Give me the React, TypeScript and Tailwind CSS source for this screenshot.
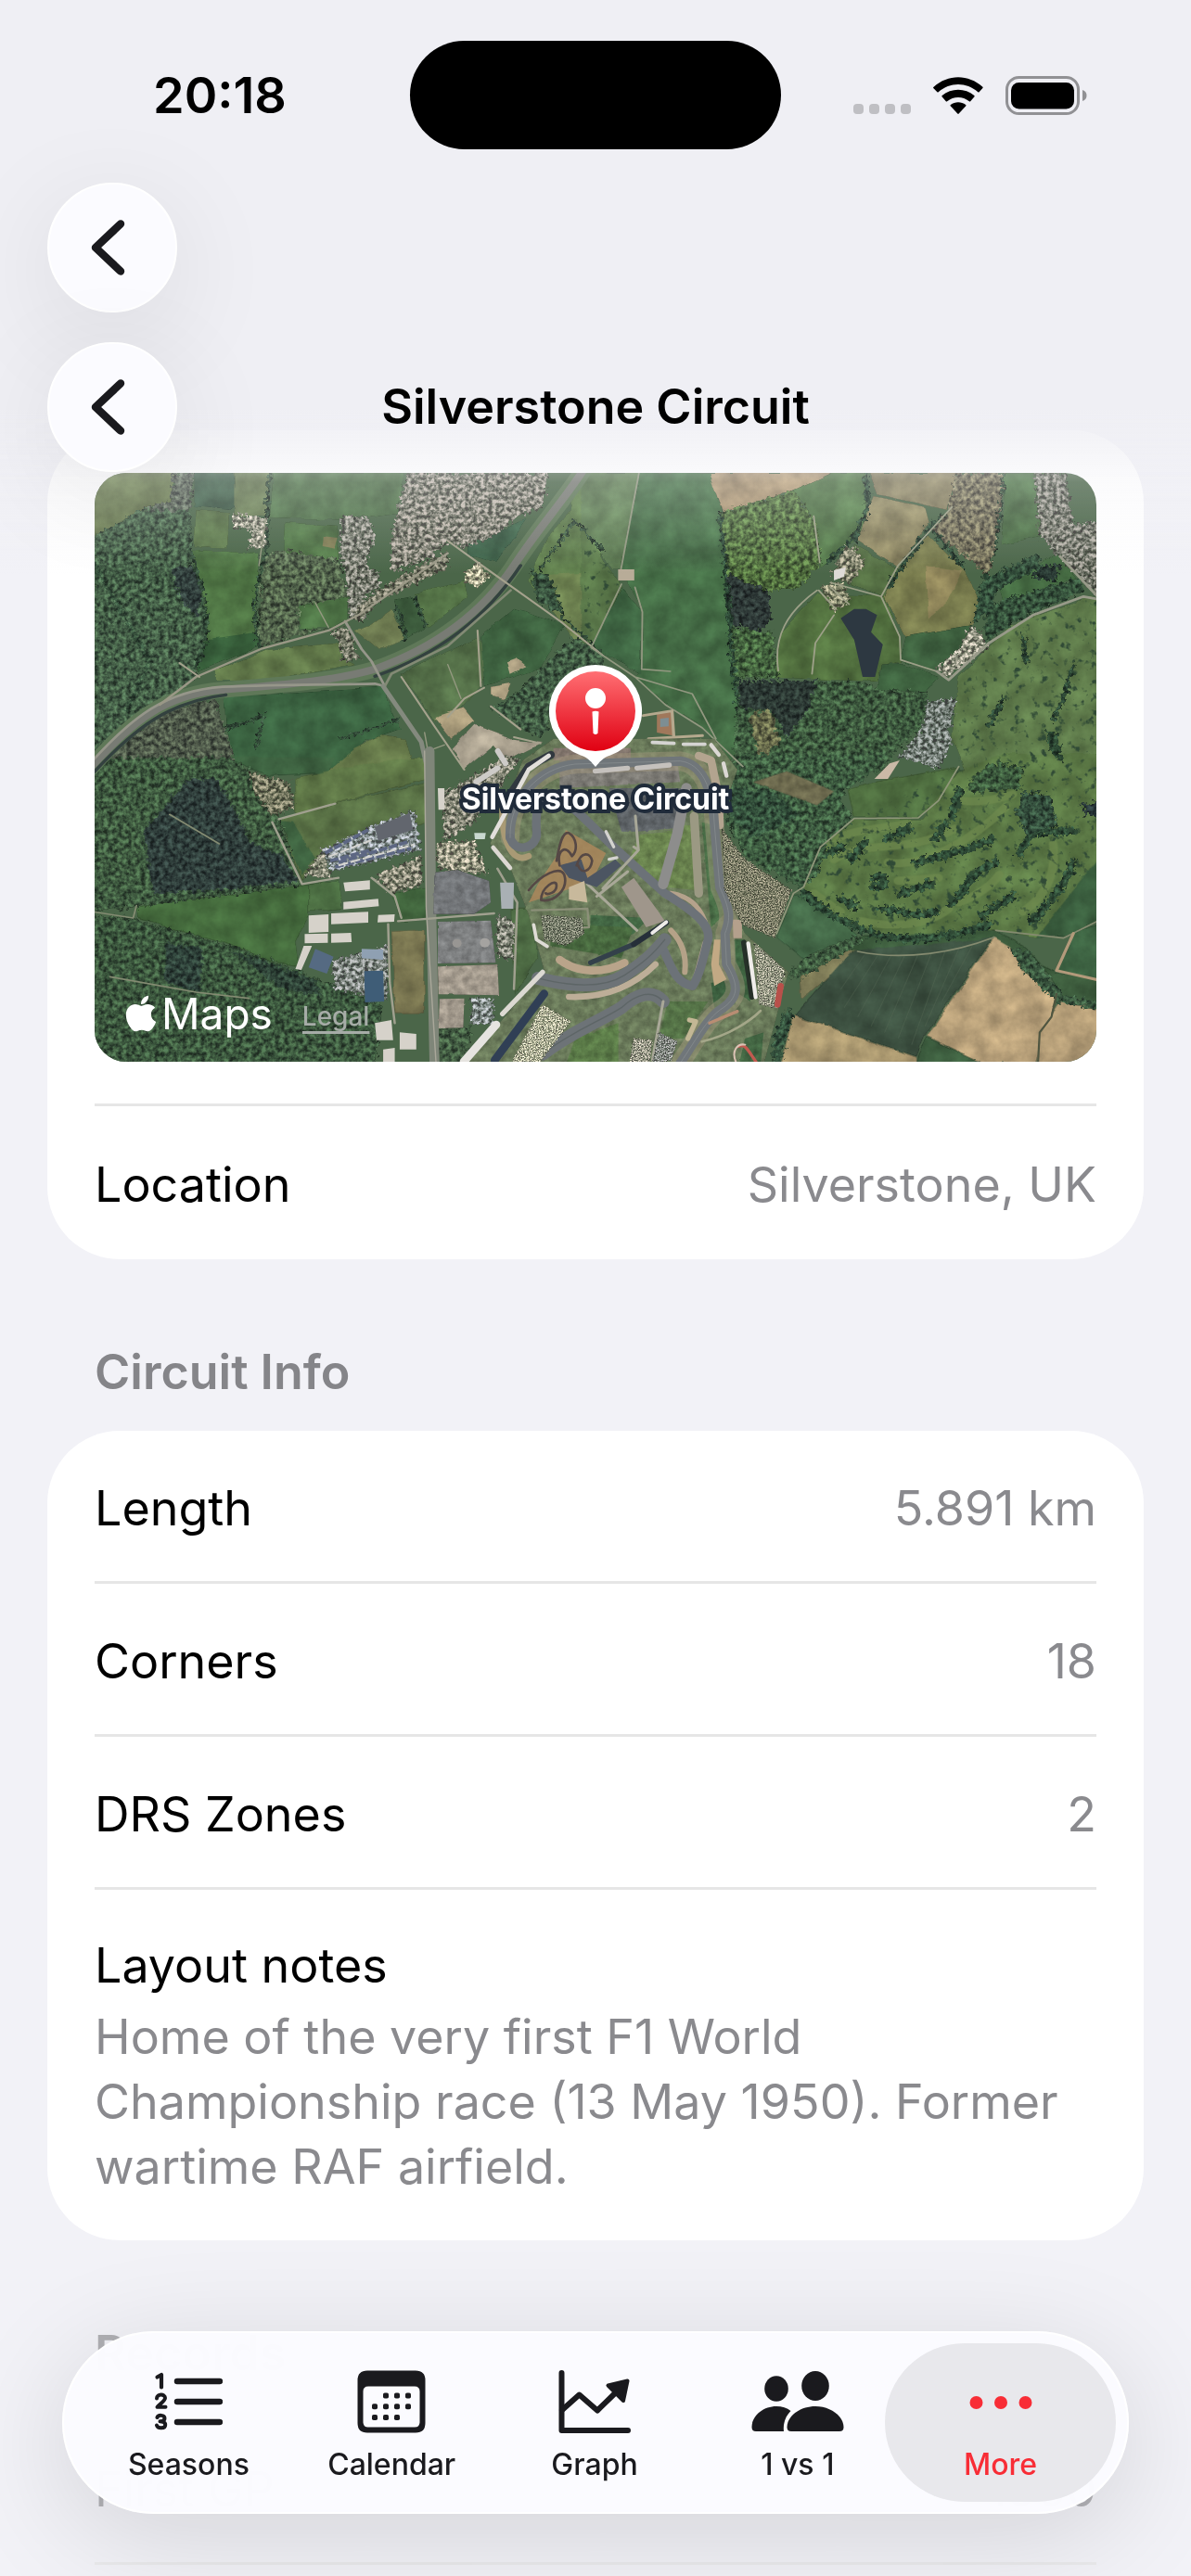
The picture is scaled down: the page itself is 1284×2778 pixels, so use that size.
import type { ReactNode } from "react";
import { FaApple } from "react-icons/fa";

type Shape = [fill: string, points: string];

const polys = (shapes: Shape[]) =>
  shapes.map(([fill, points], i) => <polygon key={i} fill={fill} points={points} />);

/* ---------- Satellite imagery, drawn sheet by sheet ---------- */

const nwFields: Shape[] = [
  ["#68794f", "30,30 272,30 265,120 180,148 30,238"],
  ["#41604a", "335,30 450,30 465,130 440,150 335,138"],
  ["#697d54", "455,30 560,30 550,168 455,168"],
  ["#4f7049", "570,30 965,30 950,160 780,182 560,175"],
  ["#5a7549", "340,150 440,160 435,272 335,268"],
  ["#4f7444", "325,278 530,290 515,520 525,590 370,572 365,430"],
  ["#365c39", "345,572 525,545 530,592 345,675"],
  ["#4e7244", "610,190 770,200 770,312 605,300"],
  ["#7d7a52", "725,235 770,240 760,278 722,270"],
  ["#4c7044", "650,460 800,430 800,500 740,530 650,535"],
  ["#62794a", "400,670 560,602 775,580 780,630 820,652 560,702 400,702"],
  ["#567548", "1000,420 1150,380 1160,430 1040,532"],
  ["#3f5f3f", "940,440 1000,428 1035,530 970,572"],
  ["#6d7a50", "865,520 930,470 970,572 890,602 820,540"],
  ["#3b5f46", "1160,260 1290,200 1340,180 1250,320 1160,290"],
  ["#607f4d", "1480,30 1568,30 1568,600 1440,500 1340,380 1400,240 1470,150"],
  ["#6d8150", "1400,360 1568,350 1568,480 1500,600 1410,470"],
  ["#3b6341", "425,752 900,722 960,860 850,900 760,985 460,962 430,850"],
  ["#66794a", "900,880 970,890 1000,995 740,995 820,922"],
  ["#546f48", "960,680 1190,560 1230,620 1200,720 1140,790 1060,832"],
  ["#3e6240", "1200,560 1300,470 1450,520 1380,660 1210,720"],
  ["#b0a283", "1230,722 1290,710 1270,762 1230,752"],
  ["#a5987c", "1280,640 1310,628 1340,655 1290,680"],
  ["#a9a08e", "1110,922 1180,842 1300,890 1390,900 1280,960 1240,912 1150,992"],
  ["#ab9d7c", "1060,820 1150,790 1180,830 1110,890"],
];

const nwWoods: Shape[] = [
  ["#5a6558", "270,30 332,30 322,155 250,160 180,148 265,120"],
  ["#456048", "30,238 180,148 322,152 330,260 320,330 365,470 370,560 340,640 340,688 250,770 130,860 30,955"],
  ["#34423f", "265,340 330,330 360,420 340,500 290,430"],
  ["#54664d", "540,290 600,280 770,310 800,430 650,460 650,540 740,532 530,592"],
  ["#515c4c", "240,790 400,762 455,960 430,1000 30,1000 30,980"],
  ["#425d45", "1290,760 1480,560 1570,620 1570,650 1430,720 1400,860 1380,890 1230,790"],
  ["#3c5742", "1350,340 1400,360 1440,480 1370,450"],
];

const nwTowns: Shape[] = [
  ["#827f79", "780,170 860,175 880,240 850,330 890,350 895,400 850,430 860,500 805,500 790,350 775,300"],
  ["#857f78", "950,150 980,30 1400,30 1390,140 1310,170 1250,230 1150,270 1100,255 1050,300 930,352 930,240"],
  ["#7d796d", "810,480 890,410 1100,280 1100,335 900,440 830,512"],
  ["#a39c92", "448,165 552,172 550,270 500,272 510,215 448,205"],
  ["#7d7a6f", "740,540 800,530 820,600 840,632 785,635 775,580"],
  ["#b3a996", "1150,350 1190,320 1230,360 1190,400 1150,380"],
];

const neFields: Shape[] = [
  ["#5c7a51", "-10,30 165,30 108,340 80,340 -10,190"],
  ["#587548", "-10,200 80,350 110,400 20,592 -10,580"],
  ["#456d46", "165,30 372,30 405,150 440,620 470,900 430,965 350,850 220,760 150,690 172,660 170,460 108,345"],
  ["#3f6643", "20,595 110,400 165,470 168,680"],
  ["#a5906f", "370,30 735,30 620,86 410,160"],
  ["#517547", "620,86 735,30 832,30 840,170 800,250 700,335 680,180"],
  ["#867f5f", "845,30 1098,30 1080,150 870,100"],
  ["#8c8560", "860,105 1010,140 1022,190 930,335 805,242"],
  ["#76794c", "930,340 1022,230 1130,350 1170,440 1150,522 950,560 890,430"],
  ["#8e8459", "1010,330 1120,350 1080,440 1020,500"],
  ["#4a6c44", "1245,30 1370,30 1370,230 1240,262"],
  ["#546e43", "800,260 930,340 890,430 790,390"],
  ["#52703f", "575,560 690,420 890,430 935,560 940,642 880,650 870,705 568,692"],
  ["#3f6240", "950,560 1150,522 1110,610 1040,672 935,635"],
  ["#3f6340", "880,650 940,645 1050,690 1010,740 870,730"],
  ["#456a42", "1230,410 1400,290 1460,370 1240,450"],
  ["#5f7b4b", "1110,690 1270,520 1500,430 1530,440 1530,995 1130,995 1090,890 1100,760"],
];

const neWoods: Shape[] = [
  ["#52703f", "405,160 620,86 690,200 700,320 640,400 550,412 430,362"],
  ["#2f3a38", "425,360 545,410 552,505 520,542 440,522"],
  ["#466640", "440,532 555,545 575,692 450,692"],
  ["#736f58", "1100,30 1242,30 1220,250 1200,362 1030,212 1080,150"],
  ["#3f5c40", "460,702 820,706 870,730 1020,740 1000,850 930,920 880,1000 440,1000"],
  ["#2d3a35", "460,702 690,702 660,800 600,885 560,800 460,790"],
  ["#6a6d4d", "490,820 550,790 580,900 520,960"],
  ["#35513d", "1180,380 1340,290 1360,330 1220,410 1210,470 1150,520"],
  ["#36523c", "1240,442 1470,370 1480,410 1280,510 1190,580 1190,480"],
  ["#2a3a34", "1340,340 1410,320 1400,380 1330,370"],
  ["#2e4a35", "1370,860 1400,870 1420,970 1380,930"],
];

const neTowns: Shape[] = [
  ["#7b7872", "1335,30 1425,30 1450,200 1530,180 1530,440 1400,290 1350,230"],
  ["#a19a90", "1075,690 1042,662 1110,600 1150,520 1185,560 1195,600"],
  ["#7b7f7e", "1020,770 1100,760 1080,870 1090,900 1050,985 935,950 1000,860"],
  ["#8f8b76", "700,400 760,380 790,440 740,480"],
  ["#8b8675", "770,270 800,270 830,325 785,390 735,360"],
];

const seFields: Shape[] = [
  ["#4f6e40", "780,90 860,70 1112,20 1050,130 990,186 800,182"],
  ["#5b7845", "800,190 1000,190 1110,30 1250,-20 1530,-20 1530,320 1340,572 1220,550 930,592 720,502 650,412 700,290"],
  ["#3b5f3f", "1530,310 1340,572 1440,565 1530,522"],
  ["#456a49", "620,435 660,430 810,565 650,642 570,570"],
  ["#3d5c3d", "650,645 820,570 1220,552 1310,600 1420,760 1530,790 1530,700 1400,690 1210,575 640,720"],
  ["#7e7b57", "640,700 780,612 812,620 645,775"],
  ["#3d5141", "790,620 1210,575 1010,892 985,958 625,822"],
  ["#baa27b", "1215,572 1262,602 1300,680 1402,752 1380,830 1340,980 1180,980 1015,895"],
  ["#b49d77", "1410,780 1530,808 1530,980 1345,980 1350,880"],
  ["#a8966e", "620,822 985,960 985,985 580,985"],
  ["#3e5f40", "1015,898 1190,985 985,985 990,955"],
  ["#3c6141", "1450,560 1530,530 1530,712 1400,682"],
];

const seWoods: Shape[] = [
  ["#3f5e42", "430,30 470,-20 900,-20 830,60 780,90 760,130 800,190 720,260 690,370 640,412 480,310 420,200"],
  ["#35523d", "440,90 560,100 640,180 500,250 430,180"],
  ["#3d5b3e", "1135,80 1200,8 1300,20 1290,95 1150,105"],
  ["#35503e", "1300,100 1380,110 1400,210 1310,240 1280,170"],
  ["#2b3a3c", "1478,140 1530,130 1530,185 1485,175"],
  ["#3b5840", "1260,600 1320,620 1420,760 1530,780 1530,805 1400,780 1300,680"],
  ["#35523e", "560,985 560,900 600,800 620,820 580,985"],
  ["#415e42", "650,640 800,570 830,585 650,700 600,700"],
];

const swFields: Shape[] = [
  ["#3d6140", "420,-10 760,-10 740,40 560,50"],
  ["#5f7747", "640,55 760,30 1000,-10 1035,-10 1040,60 760,140 640,180"],
  ["#5a7246", "590,190 760,140 1040,70 1040,200 720,300 660,390"],
  ["#3e6240", "590,195 630,200 700,320 660,370"],
  ["#456b3d", "160,470 680,402 680,500 640,590 650,665 560,650 450,600 160,512"],
  ["#4a6b41", "680,400 770,390 780,480 680,490"],
  ["#42663e", "930,430 1035,410 1035,510 960,520"],
  ["#7c7852", "930,550 1030,545 1030,820 940,820"],
  ["#7f684b", "360,615 430,620 560,712 700,772 660,806 350,752"],
  ["#4f6d45", "1290,480 1350,480 1370,640 1300,760"],
];

const swWoods: Shape[] = [
  ["#405c41", "30,-10 430,-10 500,30 590,190 655,402 165,472 30,490"],
  ["#303f3c", "180,230 320,60 400,60 470,180 500,260 600,310 645,392 400,420 210,430"],
  ["#3d593f", "30,500 150,512 450,602 620,670 900,790 880,985 30,985"],
  ["#2f423a", "250,590 360,610 350,750 245,720"],
  ["#304539", "440,610 700,710 720,760 600,740"],
  ["#435d43", "1075,870 1170,860 1160,985 1075,985"],
];

const swTowns: Shape[] = [
  ["#8f929a", "720,290 870,212 1000,165 1015,290 750,358"],
  ["#8f897d", "880,370 1020,310 1020,400 930,430"],
  ["#a29a8c", "1065,265 1180,262 1220,370 1070,350"],
  ["#8c877d", "1085,110 1270,-10 1320,-10 1180,200 1090,260"],
  ["#938e82", "668,370 720,290 750,380"],
  ["#858687", "750,650 920,600 915,770 760,740"],
  ["#8b8881", "1250,500 1300,520 1300,640 1250,640"],
  ["#8d9094", "1170,770 1235,770 1240,850 1170,850"],
  ["#7d7967", "500,40 620,70 635,150 570,180 520,110"],
];

const sheds =
  "M785,395L865,388L865,418L790,424Z M785,458L890,448L892,472L785,482Z M680,502L740,498L740,555L680,558Z M748,495L860,490L860,525L748,530Z M668,562L738,560L738,590L668,592Z M748,560L808,558L810,588L748,590Z M890,500L940,498L938,522L888,524Z M690,600L665,600L640,675L658,678Z M880,850L930,840L935,905L885,905Z M955,880L1005,885L1005,935L955,935Z M905,935L940,930L940,975L905,975Z M1070,90L1090,90L1090,160L1072,160Z";

const Line = ({ d, c, w, o = 1 }: { d: string; c: string; w: number; o?: number }) => (
  <path d={d} fill="none" stroke={c} strokeWidth={w} opacity={o} strokeLinecap="round" strokeLinejoin="round" />
);

function CircuitTrack() {
  const outer =
    "M240,310 C235,190 330,85 450,72 L790,62 C860,70 895,150 900,260 L918,470 C950,540 955,570 935,620 L940,720 C975,780 985,820 930,860 C880,890 850,950 790,1040";
  const inner =
    "M240,310 C255,365 335,345 325,285 C322,220 330,160 380,170 C440,200 500,270 580,345 L740,490 C830,545 890,590 880,640 C860,720 850,760 830,790 C770,780 760,720 725,650";
  const lower =
    "M330,765 C430,790 540,800 610,755 C670,715 700,690 740,640 M345,1010 C450,930 530,905 600,860 C650,815 700,800 735,840";
  return (
    <g transform="translate(368 290) scale(.3333)">
      <g filter="url(#ground)">
        <polygon
          fill="#6a7a5a"
          points="280,60 380,-10 900,-10 975,90 915,260 940,500 1000,620 1140,745 1060,1045 90,1045 350,740 300,560 245,420 175,330"
        />
        <polygon fill="#7c7a74" points="400,60 780,60 790,130 400,150" />
        <polygon fill="#85786f" points="380,20 630,20 630,60 380,60" />
        <polygon fill="#5f6468" points="560,150 810,150 770,280 650,290 600,290" />
        <polygon fill="#6c8650" points="660,300 765,290 720,460 620,390" />
        <polygon fill="#69824e" points="790,270 830,270 840,480 750,470" />
        <polygon fill="#436744" points="500,560 690,570 640,620 500,680" />
        <polygon fill="#48693f" points="370,590 640,600 600,700 370,660" />
        <polygon fill="#4b7048" points="860,260 900,270 930,560 890,600" />
        <polygon fill="#3d6140" points="890,780 960,770 970,850 900,860" />
        <polygon fill="#3f6441" points="965,640 1000,640 1020,840 970,810" />
        <polygon fill="#557347" points="750,840 880,840 800,960 720,960" />
        <polygon fill="#5b7b48" points="450,960 590,910 590,1045 420,1045" />
        <polygon fill="#436643" points="1000,960 1060,940 1050,1045 980,1045" />
      </g>
      <Line d={outer} c="#a4987f" w={62} o={0.45} />
      <Line d="M850,45 L890,60 L915,180 L918,270" c="#b3a48f" w={26} />
      <Line d="M215,210 C210,300 240,400 300,370" c="#a99a75" w={20} />
      <Line d="M400,705 C460,750 540,750 610,715" c="#b9a48a" w={26} />
      <Line d="M430,825 C550,830 640,790 710,720" c="#bdae98" w={20} />
      <Line d="M760,610 C800,650 810,700 805,745" c="#b5a288" w={18} />
      <Line d="M760,490 C820,500 850,530 870,580" c="#b5a28c" w={16} />
      <polygon fill="#c2a984" points="900,640 920,640 915,720 940,768 900,790 890,720" />
      <Line d="M870,650 L835,780" c="#b39f92" w={16} />
      <polygon fill="#b4a08c" points="960,575 990,575 990,635 962,635" />
      <polygon fill="#9f968b" points="600,470 640,440 720,550 740,580 680,600" />
      <Line d={outer} c="#70767a" w={30} />
      <Line d={inner} c="#6c7278" w={28} />
      <Line d={lower} c="#6d7377" w={42} />
      <Line d={lower} c="#57605f" w={4} o={0.7} />
      <Line d={outer} c="#8a8f90" w={3} o={0.7} />
      <Line d="M810,150 L780,300 L735,460" c="#8d8d8c" w={34} />
      <Line d="M835,240 L850,490" c="#9b9983" w={28} />
      <Line d="M645,240 L655,350 L540,475 M490,460 L650,610 M520,500 L620,420 M735,840 L700,1030 M655,350 L640,340" c="#a9a898" w={9} />
      <Line d="M310,545 L490,540 L495,600 L370,605" c="#8c9079" w={7} />
      <g filter="url(#roofs)">
        <polygon fill="#7d7d70" points="340,560 470,570 480,620 420,660 350,640" />
        <polygon fill="#a19a90" points="640,960 700,965 690,1045 625,1045" />
        <polygon fill="#8b8a8a" points="720,940 780,970 760,1030 700,1045" />
        <polygon fill="#b5ae9c" points="345,850 435,905 330,1045 240,1045" />
        <polygon fill="#9d988b" points="1030,650 1130,740 1100,860 1045,850" />
        <polygon fill="#827d6c" points="925,280 1000,380 1150,480 1095,635 990,590 935,480" />
      </g>
      <polygon fill="#ab875c" points="390,370 420,285 550,360 510,440 480,460 300,520 330,460" opacity=".85" />
      <polygon fill="#4c5562" points="400,400 470,380 490,440 580,380 600,400 520,470 430,440" />
      <Line
        d="M390,385 C400,330 410,290 430,295 C455,310 460,350 440,370 C420,330 390,350 400,400 M455,400 C470,350 500,360 505,385 C500,420 470,430 460,400 M300,480 C340,430 400,400 415,430 C430,480 380,520 340,512 C340,470 390,440 390,465 C390,490 360,495 355,490"
        c="#554845"
        w={8}
      />
      <polygon fill="#c8b99c" points="430,470 480,450 490,520 430,510" />
      <Line d="M372,42 L300,80 L240,170" c="#31383f" w={25} />
      <Line d="M365,45 L300,90 L182,308" c="#e2dfdb" w={14} />
      <Line d="M185,342 L240,408" c="#dcd8d2" w={14} />
      <Line d="M316,592 L325,640 L360,662" c="#dfdcd6" w={11} />
      <Line d="M500,715 L640,655" c="#33404a" w={16} />
      <Line d="M640,655 L745,585" c="#262f39" w={18} />
      <Line d="M700,618 L745,583" c="#eeece9" w={12} />
      <Line d="M350,815 L190,1030" c="#303f55" w={26} />
      <Line d="M345,745 L215,880" c="#dcd9d2" w={16} />
      <Line d="M195,915 L90,1035" c="#e6e4e0" w={26} />
      <Line d="M996,650 L1022,825" c="#263028" w={18} />
      <Line d="M1010,652 L1034,826" c="#f0edea" w={13} />
      <Line d="M1115,790 L1105,850" c="#b8504a" w={20} />
      <Line d="M980,985 C1000,975 1010,1000 1035,1035" c="#c25a50" w={10} />
      <Line d="M970,1035 C955,1000 975,975 1000,980" c="#dcc3b5" w={6} />
      <Line d="M885,910 L975,872" c="#b98d73" w={10} />
      <Line d="M860,970 C950,950 1020,900 1050,870" c="#a4a789" w={8} />
      <Line d="M820,900 L840,905 L815,960" c="#c3b795" w={16} />
      <Line d="M515,95 L620,85 M650,85 L755,75" c="#c5c1bd" w={16} />
      <Line d="M200,30 L225,70 M130,130 L200,85" c="#cdcbc8" w={18} />
      <Line d="M700,2 L770,5 M800,8 L870,8" c="#d5d4d2" w={11} />
      <Line d="M890,10 L915,42 M930,70 L940,110" c="#dcd8d4" w={13} />
      <Line d="M550,290 L575,340 M585,375 L560,380" c="#d4d3d0" w={10} />
    </g>
  );
}

function SatelliteImage() {
  return (
    <svg
      className="block aspect-[1080/635] w-full"
      viewBox="0 0 1080 635"
      preserveAspectRatio="xMidYMid slice"
      role="img"
      aria-label="Satellite view of Silverstone Circuit"
    >
      <defs>
        <filter id="canopy" x="-5%" y="-5%" width="110%" height="110%" colorInterpolationFilters="sRGB">
          <feTurbulence type="fractalNoise" baseFrequency=".2" numOctaves="3" seed="4" result="n" />
          <feColorMatrix in="n" type="matrix" values="2 0 0 0 -.5 2 0 0 0 -.5 1.8 0 0 0 -.4 0 0 0 0 1" result="m" />
          <feDisplacementMap in="SourceGraphic" in2="n" scale="12" xChannelSelector="G" yChannelSelector="B" result="s" />
          <feComposite in="s" in2="m" operator="arithmetic" k1=".95" k2=".5" />
        </filter>
        <filter id="roofs" x="-5%" y="-5%" width="110%" height="110%" colorInterpolationFilters="sRGB">
          <feTurbulence type="fractalNoise" baseFrequency=".24" numOctaves="3" seed="11" result="n" />
          <feColorMatrix in="n" type="matrix" values="2.7 0 0 0 -.9 2.5 0 0 0 -.75 2.7 0 0 0 -.9 0 0 0 0 1" result="m" />
          <feDisplacementMap in="SourceGraphic" in2="n" scale="12" xChannelSelector="G" yChannelSelector="B" result="s" />
          <feComposite in="s" in2="m" operator="arithmetic" k1="1" k2=".5" />
        </filter>
        <filter id="ground" x="-5%" y="-5%" width="110%" height="110%" colorInterpolationFilters="sRGB">
          <feTurbulence type="fractalNoise" baseFrequency=".04" numOctaves="5" seed="8" result="n" />
          <feColorMatrix in="n" type="matrix" values="1.3 0 0 0 -.15 1.3 0 0 0 -.15 1.3 0 0 0 -.15 0 0 0 0 1" result="m" />
          <feDisplacementMap in="SourceGraphic" in2="n" scale="6" xChannelSelector="G" yChannelSelector="B" result="s" />
          <feComposite in="s" in2="m" operator="arithmetic" k1=".4" k2=".8" />
        </filter>
        <filter id="trees" x="-5%" y="-5%" width="110%" height="110%" colorInterpolationFilters="sRGB">
          <feTurbulence type="fractalNoise" baseFrequency=".11" numOctaves="3" seed="21" result="n" />
          <feColorMatrix in="n" type="matrix" values="0 0 0 0 .19 0 0 0 0 .29 0 0 0 0 .21 6 0 0 0 -3.6" result="m" />
          <feComposite in="m" in2="SourceAlpha" operator="in" />
        </filter>
      </defs>

      <rect width="1080" height="635" fill="#4b6649" />

      <g filter="url(#ground)">
        <g transform="matrix(.357 0 0 .3333 -12 -10)">{polys(nwFields)}</g>
        <g transform="matrix(.3636 0 0 .3333 528 -10)">{polys(neFields)}</g>
        <g transform="matrix(.357 0 0 .3333 -12 310)">{polys(swFields)}</g>
        <g transform="matrix(.3636 0 0 .3333 528 310)">{polys(seFields)}</g>
      </g>

      {/* dark crop rows and fairways */}
      <g transform="matrix(.3636 0 0 .3333 528 310)">
        <path
          d="M830,630L760,740M870,630L770,800M910,630L810,830M950,630L850,860M990,625L890,880M1030,620L930,900M1070,615L970,920M1110,610L1010,860M1150,600L1060,780"
          stroke="#5a6b58"
          strokeWidth="2"
          opacity=".7"
        />
        <Line d="M720,270 C780,220 900,220 960,205 M740,320 C850,250 950,310 1100,220 M900,330 C1000,350 1150,260 1250,150 M930,390 L1050,380 M1110,460 C1180,430 1210,400 1230,370 M820,520 C900,540 1010,540 1080,480 M680,430 C720,460 740,480 760,490 M1300,490 C1370,440 1400,360 1390,270 M1120,130 C1180,140 1240,120 1270,110" c="#6f8a4f" w={26} o={0.7} />
      </g>
      <g filter="url(#canopy)">
        <g transform="matrix(.3636 0 0 .3333 528 310)">
          <Line d="M760,280 L710,310 M830,265 L790,320 M960,220 L900,250 M1040,250 L1070,210 M980,330 C1050,310 1120,300 1210,255 M860,380 C900,360 900,420 860,410 M940,430 L1030,400 M1090,460 C1130,440 1120,370 1220,330 M760,450 C780,440 780,480 800,470 M880,480 C950,490 1000,510 1040,490 M650,430 C720,500 780,530 880,570 C980,590 1100,570 1200,530 M1180,500 L1270,440 M1330,520 L1420,400 L1450,330 M1290,300 L1330,230 L1450,230 M1090,180 L1110,100" c="#314e39" w={24} />
        </g>
        <g transform="matrix(.3636 0 0 .3333 528 -10)">
          <Line d="M1450,650 L1420,760 L1390,830 M1240,760 L1200,850 M1300,560 L1310,640 M405,160 L440,640 L470,900 M835,40 L840,150 L800,240 L720,320 M1080,160 L1020,210 L900,400 M1240,40 L1220,240 L1190,370 M1030,210 L1120,330" c="#2f4a38" w={13} />
        </g>
      </g>
      <g filter="url(#trees)">
        <g transform="matrix(.3636 0 0 .3333 528 -10)">
          <polygon points="1110,720 1300,520 1518,430 1518,990 1110,990" />
          <polygon points="0,190 80,340 110,400 20,590 0,590" />
        </g>
        <g transform="matrix(.3636 0 0 .3333 528 310)">
          <polygon points="700,290 800,190 1110,30 1518,0 1518,320 1340,560 930,590 720,500" />
        </g>
      </g>

      <g filter="url(#canopy)">
        <g transform="matrix(.357 0 0 .3333 -12 -10)">
          {polys(nwWoods)}
          <Line d="M325,280 L365,440 L370,560 L340,660 M560,30 L550,280 L515,450 L530,590 M425,860 L545,815 L520,920 M780,890 L950,830 M1400,360 L1450,500 L1560,610 M945,460 L975,570 M1000,440 L1035,530 M1480,180 L1568,280 M1480,190 L1380,340 M30,320 L200,640 L130,800" c="#334b39" w={10} />
        </g>
        <g transform="matrix(.3636 0 0 .3333 528 -10)">{polys(neWoods)}</g>
        <g transform="matrix(.357 0 0 .3333 -12 310)">{polys(swWoods)}</g>
        <g transform="matrix(.3636 0 0 .3333 528 310)">{polys(seWoods)}</g>
      </g>
      <g filter="url(#ground)" transform="matrix(.3636 0 0 .3333 528 310)">
        <polygon fill="#6f6c50" points="500,70 600,35 740,100 690,145" />
      </g>
      <g filter="url(#roofs)">
        <g transform="matrix(.357 0 0 .3333 -12 -10)">{polys(nwTowns)}</g>
        <g transform="matrix(.3636 0 0 .3333 528 -10)">{polys(neTowns)}</g>
        <g transform="matrix(.357 0 0 .3333 -12 310)">{polys(swTowns)}</g>
      </g>

      {/* dual carriageway and lanes, north west */}
      <g transform="matrix(.357 0 0 .3333 -12 -10)">
        <Line d="M20,985 C150,830 250,745 420,732 C600,715 750,705 880,665 C1050,600 1200,490 1300,330 C1380,200 1450,120 1510,20" c="#5f7858" w={52} />
        <Line d="M20,985 C150,830 250,745 420,732 C600,715 750,705 880,665 C1050,600 1200,490 1300,330 C1380,200 1450,120 1510,20" c="#787b74" w={24} />
        <Line d="M30,1000 C160,850 260,770 430,748 M880,688 C1060,622 1210,510 1320,330" c="#33413f" w={10} />
        <Line d="M20,970 C150,815 250,735 420,722 C600,715 760,715 880,712 L910,720 L870,640 L840,600 L790,510" c="#96968a" w={8} />
        <Line d="M910,720 L930,680 L1100,590 L1290,410" c="#838a75" w={8} />
        <Line d="M230,780 L340,690 L540,598 L740,540 L830,490 L1100,290" c="#9a9886" w={7} />
        <Line d="M290,645 L350,690 M1100,250 L1230,350 L1440,510 L1568,620 M1190,540 L1200,720 M1210,725 L1150,760 L1100,820 M960,690 L1060,850 L1150,990 M1230,785 L1320,860 M1300,885 L1380,905" c="#a5a28d" w={6} />
        <Line d="M905,720 L1020,900 L1040,995" c="#848a7e" w={14} />
        <Line d="M700,450 L740,530 M550,180 L530,330 M1100,650 L1140,760 M1030,870 L1040,930 L1090,910" c="#949880" w={4} />
      </g>
      {/* lanes and lake, north east */}
      <g transform="matrix(.3636 0 0 .3333 528 -10)">
        <polygon fill="#2d3841" points="760,500 800,470 835,470 868,490 850,545 885,585 862,690 825,690 800,570" />
        <Line d="M162,30 L108,345 M110,390 L20,595 M150,400 L172,480 L170,665 L255,672 M20,595 L150,690 L320,745 L390,890 M150,690 L240,780 L350,855 L470,980" c="#929880" w={5} />
        <rect x="100" y="342" width="48" height="36" fill="#b8ac98" />
        <Line d="M690,410 C600,480 560,560 575,670 M730,385 L880,430 L935,560 L938,635 L1045,672 M740,490 L685,580 L675,680 M680,170 L698,320 M695,410 L745,470 M730,400 L785,455 M880,430 L930,330 L1090,140" c="#9da088" w={5} />
        <Line d="M1045,672 L1080,700 L1200,580 L1330,490 L1480,430 L1530,440 M1410,300 L1530,440" c="#989a89" w={8} />
        <polygon fill="#dedad6" points="740,345 775,335 770,365 740,378" />
        <polygon fill="#a0785b" points="215,810 262,800 262,880 215,870" />
        <polygon fill="#7d8e93" points="225,825 250,822 250,850 225,852" />
        <Line d="M175,815 L260,800 L265,880 M190,890 L350,880" c="#b5a98e" w={9} />
      </g>
      {/* industrial estate, south west */}
      <g transform="matrix(.357 0 0 .3333 -12 310)">
        <Line d="M1045,-30 L1050,480 L1060,985" c="#7f8679" w={30} />
        <Line d="M1030,-30 L1035,480 L1065,985" c="#a9a79a" w={4} />
        <Line d="M950,520 L1240,495 M920,530 L925,720 L940,850 M870,380 L940,440 L960,510 M1250,350 L1310,460 L1300,740 M570,200 L660,400 L770,380 M590,190 L760,140" c="#a0a08f" w={7} />
        <g filter="url(#ground)">
          <polygon fill="#74777a" points="1060,362 1130,355 1225,390 1230,460 1180,497 1057,497" />
          <polygon fill="#7e8081" points="1070,522 1230,518 1245,655 1070,657" />
          <polygon fill="#a39a8d" points="1070,667 1250,660 1255,760 1072,757" />
          <polygon fill="#a39a8d" points="1075,772 1150,770 1147,865 1072,867" />
        </g>
        <circle cx="1128" cy="592" r="14" fill="#989693" />
        <circle cx="1212" cy="590" r="15" fill="#a5a3a0" />
        <path d="M880,215 L985,170 L995,225 L890,260Z" fill="#62666e" />
        <path d="M730,300L860,225M745,325L870,290M760,345L990,285M770,330L985,262" stroke="#5d6783" strokeWidth="11" strokeDasharray="26 6" />
        <path d="M740,312L870,258M770,340L1000,272" stroke="#d5d4d0" strokeWidth="6" strokeDasharray="30 8" />
        <path d={sheds} fill="#d6d2ca" />
        <polygon fill="#556a82" points="700,610 755,635 735,690 680,670" />
        <polygon fill="#8fa0b2" points="840,610 905,612 905,645 840,640" />
        <polygon fill="#3f5d77" points="848,682 905,680 908,780 850,783" />
        <polygon fill="#c9d8d0" points="1180,235 1215,235 1212,255 1182,255" />
        <polygon fill="#a9b0b4" points="1258,395 1300,395 1298,480 1262,480" />
        <Line d="M30,490 L150,510 L160,470 M80,700 L340,750 L500,770 M260,175 L410,270" c="#848b72" w={5} />
      </g>
      <CircuitTrack />
      {/* boundary lanes, south east */}
      <g transform="matrix(.3636 0 0 .3333 528 310)">
        <Line d="M570,560 L620,430 L650,410 L700,280 L800,188 L990,186 L1050,130 L1110,20" c="#8f967a" w={5} />
        <Line d="M810,618 C950,650 1100,620 1215,572 M1220,550 L1420,575 L1518,522" c="#858b70" w={5} />
        <Line d="M1450,560 L1400,680 L1530,712" c="#b39a7b" w={9} />
        <Line d="M1400,755 L1385,830 L1350,880 L1345,980" c="#4f5540" w={6} />
        <polygon fill="#cbb9a7" points="860,60 905,10 935,0 900,60" />
      </g>
    </svg>
  );
}

function MapPin() {
  return (
    <svg className="block h-[112px] w-[104px]" viewBox="0 0 104 112" aria-hidden="true">
      <defs>
        <linearGradient id="pinFill" x1="0" y1="0" x2="0" y2="1">
          <stop offset="0" stopColor="#ff6f73" />
          <stop offset="1" stopColor="#e00012" />
        </linearGradient>
      </defs>
      <path
        d="M52 1a50 50 0 0 1 16 97.400C60 101 56 106 52 111c-4-5-8-10-16-12.600A50 50 0 0 1 52 1Z"
        fill="#fff"
      />
      <circle cx="52" cy="51" r="43" fill="url(#pinFill)" />
      <circle cx="52" cy="37" r="11" fill="#fff" />
      <path d="M48.500 51.500q3.500-1.500 7 0l-1 23q-2.500 3-5 0Z" fill="#fff" />
    </svg>
  );
}

/* ---------- Status bar ---------- */

function StatusBar() {
  return (
    <div className="grid h-[197px] grid-cols-[1fr_400px_1fr] items-start pt-[44px]">
      <div className="flex h-[117px] items-center justify-center pl-[32px] text-[54px] font-semibold">20:18</div>
      <div className="h-[117px] rounded-full bg-black" />
      <div className="flex h-[117px] items-center justify-end gap-[24px] pr-[112px]">
        <div className="flex gap-[6px] pt-[30px]">
          {[0, 1, 2, 3].map((i) => (
            <span key={i} className="size-[11px] rounded-[4px] bg-[#bfbfc3]" />
          ))}
        </div>
        <svg className="h-[40px] w-[54px]" viewBox="0 0 54 40" aria-label="Wi-Fi" role="img">
          <path d="M0 11.800Q0 11.300 .6 10.700C16 -3.300 38 -3.300 53.400 10.700Q54 11.300 53.400 12L49.600 16.200Q49 16.800 48.300 16.200C36 5.200 18 5.200 5.700 16.200Q5 16.800 4.400 16.200Z" />
          <path d="M9.500 21.200Q9 20.600 9.700 20C19.600 11.600 34.400 11.600 44.300 20Q45 20.600 44.500 21.200L40.200 26.200Q39.600 26.800 38.900 26.300C32 20.600 22 20.600 15.100 26.300Q14.400 26.800 13.800 26.200Z" />
          <path d="M18.700 31.200Q18.200 30.600 18.900 30C23.600 26.200 30.400 26.200 35.100 30Q35.800 30.600 35.300 31.200L27.700 39.600Q27 40.300 26.300 39.600Z" />
        </svg>
        <svg className="h-[42px] w-[88px]" viewBox="0 0 88 42" aria-label="Battery full" role="img">
          <rect x="1.500" y="1.500" width="77" height="39" rx="13" fill="none" stroke="#919194" strokeWidth="3" />
          <rect x="6" y="7" width="68" height="28.500" rx="8.500" />
          <path d="M83 15q4.500 1.500 4.500 6t-4.500 6Z" fill="#919194" />
        </svg>
      </div>
    </div>
  );
}

function BackButton() {
  return (
    <button
      type="button"
      aria-label="Back"
      className="flex size-[140px] items-center justify-center rounded-full border-2 border-white bg-[#fbfbff] shadow-[0_24px_120px_rgba(0,0,0,0.09)]"
    >
      <svg className="mr-[10px] h-[62px] w-[38px]" viewBox="0 0 38 62" fill="none" aria-hidden="true">
        <path d="M33 5.500 6 31l27 25.500" stroke="#1a1a1e" strokeWidth="8.500" strokeLinecap="round" strokeLinejoin="round" />
      </svg>
    </button>
  );
}

/* ---------- Lists ---------- */

function Row({ label, value, last = false }: { label: string; value: string; last?: boolean }) {
  return (
    <div
      className={
        last
          ? "flex h-[165px] items-center justify-between pt-[4px]"
          : "flex h-[165px] items-center justify-between border-b-[3px] border-[#e6e6e6] pt-[6px]"
      }
    >
      <dt>{label}</dt>
      <dd className="text-[#8a8a8e]">{value}</dd>
    </div>
  );
}

function Section({ title, children }: { title: string; children: ReactNode }) {
  return (
    <section>
      <h2 className="px-[51px] pt-[90px] pb-[31px] text-[52px] leading-[64px] font-semibold text-[#858589]">{title}</h2>
      {children}
    </section>
  );
}

/* ---------- Tab bar ---------- */

const seasonsIcon = (
  <svg className="h-[68px] w-[74px]" viewBox="0 0 74 68" fill="none" stroke="#1a1a1e" strokeLinecap="round" strokeLinejoin="round" aria-hidden="true">
    <path d="M25 12H71M25 34H71M25 56H71" strokeWidth="6.500" />
    <path d="M3.500 7.500 8 5V18.500" strokeWidth="4.200" />
    <path d="M3 30.500C3 25.200 12 25.200 12 30C12 33 7.500 35.500 3.500 39.800H12.500" strokeWidth="4" />
    <path d="M3.500 51C4.500 48 11.500 48 11.500 52C11.500 54.500 9 55.200 6.500 55.200C9.500 55.200 12.200 56.200 12.200 59C12.200 63.300 4 63.300 3 59.500" strokeWidth="4" />
  </svg>
);

const calendarIcon = (
  <svg className="h-[68px] w-[74px]" viewBox="0 0 74 68" aria-hidden="true">
    <path
      fill="#1a1a1e"
      fillRule="evenodd"
      d="M11 .5H63Q73.500 .5 73.500 11V57Q73.500 67.500 63 67.500H11Q.5 67.500 .5 57V11Q.5 .5 11 .5ZM12 17.500Q6.500 17.500 6.500 23V56Q6.500 61.500 12 61.500H62Q67.500 61.500 67.500 56V23Q67.500 17.500 62 17.500Z"
    />
    {[
      [31, 27.500], [43, 27.500], [55, 27.500],
      [19, 39.200], [31, 39.200], [43, 39.200], [55, 39.200],
      [19, 51], [31, 51], [43, 51],
    ].map(([x, y]) => (
      <rect key={`${x}-${y}`} x={x - 3} y={y - 3} width="6" height="6" rx="1.800" fill="#1a1a1e" />
    ))}
  </svg>
);

const graphIcon = (
  <svg className="h-[68px] w-[78px]" viewBox="0 0 78 68" fill="none" stroke="#1a1a1e" strokeWidth="6" strokeLinecap="round" strokeLinejoin="round" aria-hidden="true">
    <path d="M3.500 3V65H75" />
    <path d="M4 43 22.500 26.500 42 43.500 62 24" />
    <path d="M53.500 16.500 74.500 11.500 70 33Z" fill="#1a1a1e" strokeWidth="4" />
  </svg>
);

const peopleIcon = (
  <svg className="h-[68px] w-[100px]" viewBox="0 0 100 68" fill="#1a1a1e" aria-hidden="true">
    <ellipse cx="27" cy="20" rx="12.800" ry="13.800" />
    <ellipse cx="69" cy="17" rx="14.800" ry="16" />
    <path d="M42.500 44C36.500 50 34 58 35 66H5Q.5 66 .5 61.500C.5 50 12 39 27 39C33 39 38.500 40.800 42.500 44Z" />
    <path d="M69 39C86 39 99.500 50 99.500 61.500Q99.500 66 95 66H43Q38.500 66 38.500 61.500C38.500 50 52 39 69 39Z" />
  </svg>
);

const moreIcon = (
  <svg className="h-[68px] w-[68px]" viewBox="0 0 68 68" fill="#f82d36" aria-hidden="true">
    <circle cx="7.500" cy="35" r="7" />
    <circle cx="34" cy="35" r="7" />
    <circle cx="60.500" cy="35" r="7" />
  </svg>
);

const tabs = [
  { label: "Seasons", icon: seasonsIcon },
  { label: "Calendar", icon: calendarIcon },
  { label: "Graph", icon: graphIcon },
  { label: "1 vs 1", icon: peopleIcon },
  { label: "More", icon: moreIcon, active: true },
];

function TabBar() {
  return (
    <nav
      aria-label="Main"
      className="fixed inset-x-[67px] bottom-[67px] z-20 grid h-[197px] grid-cols-5 rounded-full border-2 border-white bg-[#fbfbff]/[0.985] pr-[27px] pl-[25px] py-[11px] shadow-[0_24px_120px_rgba(0,0,0,0.13)]"
    >
      {tabs.map(({ label, icon, active }) => (
        <button
          key={label}
          type="button"
          aria-current={active ? "page" : undefined}
          className={
            active
              ? "relative flex flex-col items-center pt-[29px] text-[#f82d36]"
              : "relative flex flex-col items-center pt-[29px] text-[#1a1a1e]"
          }
        >
          {active && <span className="absolute -inset-x-[15px] inset-y-0 rounded-full bg-[#e8e8ec]" />}
          <span className="relative">{icon}</span>
          <span className="relative mt-[14px] text-[32px] leading-[40px] font-medium whitespace-nowrap">{label}</span>
        </button>
      ))}
    </nav>
  );
}

export default function App() {
  return (
    <div className="min-h-screen bg-[#f2f2f7] font-[Inter,sans-serif] text-[52px] leading-[70px] text-black">
      <header className="fixed inset-x-0 top-0 z-20">
        <div className="absolute inset-x-0 top-0 -z-10 h-[640px] bg-[linear-gradient(to_bottom,#efeff4_0,#efeff4_440px,rgba(239,239,244,0.6)_485px,rgba(239,239,244,0.25)_520px,transparent_620px)]" />
        <StatusBar />
        <div className="px-[51px]">
          <BackButton />
        </div>
        <div className="mt-[32px] grid grid-cols-[140px_1fr_140px] items-center px-[51px]">
          <BackButton />
          <h1 className="text-center font-semibold">Silverstone Circuit</h1>
        </div>
      </header>

      <main className="px-[51px] pt-[464px]">
        <section className="rounded-[78px] bg-white px-[51px] pt-[46px]">
          <div className="relative overflow-hidden rounded-[34px]">
            <SatelliteImage />
            <div className="absolute inset-x-0 top-[206px] flex flex-col items-center">
              <MapPin />
              <div className="mt-[14px] text-[32px] leading-[40px] font-bold text-white [paint-order:stroke_fill] [-webkit-text-stroke:8px_#202b3a]">
                Silverstone Circuit
              </div>
            </div>
            <div className="absolute bottom-[24px] left-[28px] flex items-center text-white">
              <FaApple className="size-[44px]" aria-hidden="true" />
              <span className="text-[46px] leading-[56px]">Maps</span>
              <a href="#legal" className="ml-[32px] pt-[6px] text-[28px] leading-[40px] font-medium text-[#a6aca7] underline decoration-[3px] underline-offset-[6px]">
                Legal
              </a>
            </div>
          </div>
          <dl className="mt-[45px] border-t-[3px] border-[#e6e6e6]">
            <Row label="Location" value="Silverstone, UK" last />
          </dl>
        </section>

        <Section title="Circuit Info">
          <div className="rounded-[78px] bg-white px-[51px] pb-[44px]">
            <dl>
              <Row label="Length" value="5.891 km" />
              <Row label="Corners" value="18" />
              <Row label="DRS Zones" value="2" />
              <div className="pt-[47px]">
                <dt>Layout notes</dt>
                <dd className="mt-[7px] text-[#8a8a8e]">
                  Home of the very first F1 World Championship race (13 May 1950). Former wartime RAF airfield.
                </dd>
              </div>
            </dl>
          </div>
        </Section>

        <div className="opacity-60">
          <Section title="Records">
            <dl className="px-[51px] text-[#8a8a8e]">
              <Row label="First GP" value="1950" />
            </dl>
          </Section>
        </div>
      </main>
      <TabBar />
    </div>
  );
}
